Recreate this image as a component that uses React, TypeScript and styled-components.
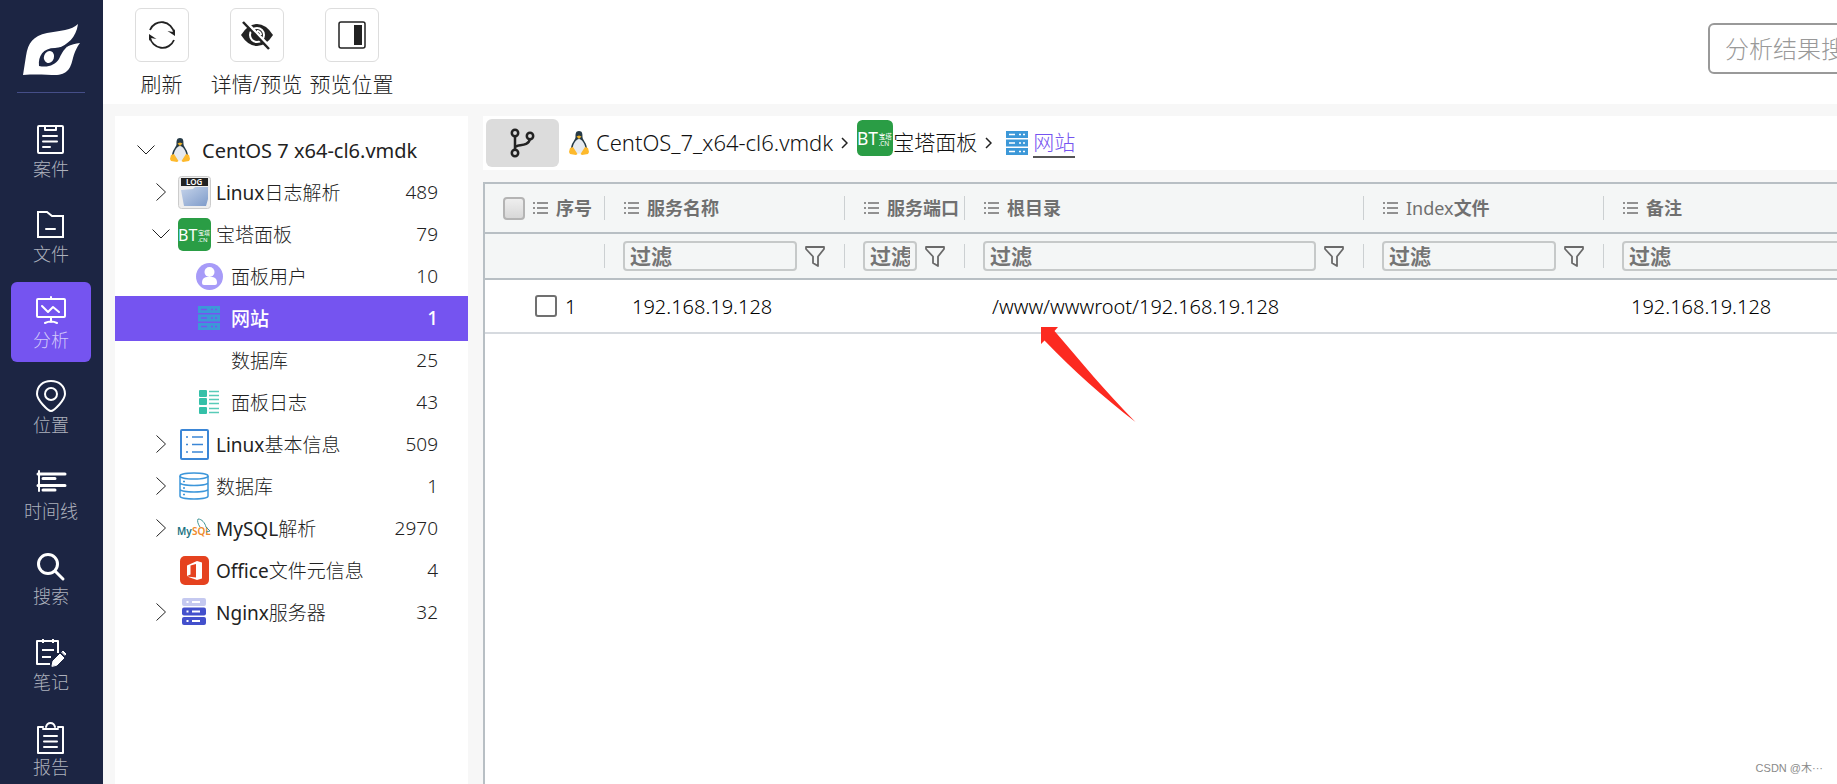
import React from "react";
import styled, { createGlobalStyle, css } from "styled-components";

const latin = `"Noto Sans", "Noto Sans CJK SC", sans-serif`;

const GlobalStyle = createGlobalStyle`
  * { box-sizing: border-box; }
  body { margin: 0; font-family: ${latin}; color: #222; background: #f7f7f7; }
  button, input { font-family: inherit; }
`;

const Page = styled.div`
  display: flex;
  height: 100vh;
  overflow: hidden;
  position: relative;
`;

const Sidebar = styled.nav`
  flex: 0 0 103px;
  background: #1c2543;
  display: flex;
  flex-direction: column;
  align-items: center;
  padding: 22px 1px 0 0;
  > * { flex-shrink: 0; }
`;

const SidebarRule = styled.hr`
  width: 68px;
  height: 1px;
  margin: 15px 0 18px;
  border: 0;
  background: #454e88;
`;

const SideList = styled.ul`
  list-style: none;
  margin: 0;
  padding: 0;
  display: flex;
  flex-direction: column;
  justify-content: space-between;
  height: 678px;
`;

const SideButton = styled.button<{ $active?: boolean }>`
  width: 80px;
  height: 80px;
  border: 0;
  border-radius: 6px;
  padding: 12px 0 0;
  display: flex;
  flex-direction: column;
  align-items: center;
  background: ${(p) => (p.$active ? "#7554f0" : "transparent")};
  color: ${(p) => (p.$active ? "#d2c8fa" : "#adb1bd")};
  font-size: 18px;
  font-weight: 300;
  line-height: 26px;
  svg { color: #fff; }
`;

const Workspace = styled.div`
  flex: 1;
  min-width: 0;
  display: flex;
  flex-direction: column;
`;

const Toolbar = styled.header`
  flex: 0 0 104px;
  background: #fff;
  display: flex;
  align-items: flex-start;
  padding: 8px 0 0 11px;
  overflow: hidden;
`;

const ToolButton = styled.button`
  width: 95px;
  padding: 0;
  border: 0;
  background: none;
  display: flex;
  flex-direction: column;
  align-items: center;
  font-size: 21px;
  font-weight: 300;
  line-height: 30px;
  white-space: nowrap;
  color: #222;
`;

const ToolIcon = styled.span`
  width: 54px;
  height: 54px;
  margin-bottom: 7px;
  border: 1px solid #ddd;
  border-radius: 6px;
  display: flex;
  align-items: center;
  justify-content: center;
`;

const SearchBox = styled.input`
  flex: none;
  width: 260px;
  height: 51px;
  margin: 15px -131px 0 auto;
  padding: 0 15px;
  border: 2px solid #999;
  border-radius: 6px;
  font-size: 24px;
  font-weight: 300;
  outline: 0;
  &::placeholder { color: #999; opacity: 1; }
`;

const Body = styled.div`
  flex: 1;
  min-height: 0;
  display: flex;
  gap: 15px;
  padding: 12px 0 0 12px;
`;

const TreePanel = styled.aside`
  flex: 0 0 353px;
  background: #fff;
`;

const Tree = styled.ul`
  list-style: none;
  margin: 0;
  padding: 13px 0 0;
`;

const indent = [20, 35, 35];

const TreeRow = styled.li<{ $level: number; $selected?: boolean }>`
  height: 42px;
  padding: 0 30px 0 ${(p) => indent[p.$level]}px;
  display: flex;
  align-items: center;
  font-size: ${(p) => (p.$level === 0 ? 20 : 19)}px;
  font-weight: ${(p) => (p.$level === 0 ? 400 : 300)};
  white-space: nowrap;
  ${(p) =>
    p.$selected &&
    css`
      background: #7554f0;
      box-shadow: 0 -1px 0 #7554f0, 0 2px 0 #7554f0;
      color: #fff;
      font-weight: 500;
    `}
`;

const Chevron = styled.span`
  flex: 0 0 22px;
  display: flex;
  justify-content: center;
`;

const TreeIcon = styled.span<{ $level: number }>`
  flex: 0 0 ${(p) => [45, 44, 59][p.$level]}px;
  padding: 0 ${(p) => [5, 0, 0][p.$level]}px 0 ${(p) => [5, 0, 15][p.$level]}px;
  display: flex;
  justify-content: center;
`;

const TreeLabel = styled.span`
  flex: 1;
`;

const Main = styled.main`
  flex: 1;
  min-width: 0;
  display: flex;
  flex-direction: column;
  gap: 12px;
`;

const Crumbs = styled.div`
  flex: 0 0 54px;
  background: #fff;
  display: flex;
  align-items: center;
  padding-left: 3px;
  font-size: 21px;
  font-weight: 300;
  white-space: nowrap;
`;

const BranchButton = styled.button`
  width: 73px;
  height: 48px;
  margin-right: 10px;
  padding: 0;
  border: 0;
  border-radius: 6px;
  background: #dcdcdc;
  display: flex;
  align-items: center;
  justify-content: center;
`;

const Crumb = styled.a<{ $gap?: number; $current?: boolean; $raised?: boolean }>`
  display: flex;
  align-items: center;
  gap: ${(p) => p.$gap ?? 0}px;
  padding-left: ${(p) => (p.$current ? 5 : 0)}px;
  color: ${(p) => (p.$current ? "#7554f0" : "#111")};
  text-decoration: none;
  svg { margin-bottom: ${(p) => (p.$raised ? 10 : 0)}px; }
  > span {
    line-height: 28px;
    border-bottom: 2px solid ${(p) => (p.$current ? "#555" : "transparent")};
  }
`;

const DiskName = styled.span`
  font-size: 22px;
`;

const CrumbArrow = styled.svg`
  margin: 0 9px 0 8px;
`;

const TableFrame = styled.section`
  flex: 1;
  min-height: 0;
  overflow: hidden;
  background: #fff;
  border: solid #b8bfc4;
  border-width: 2px 0 0 2px;
`;

const Table = styled.table`
  table-layout: fixed;
  width: 1518px;
  border-collapse: collapse;
  th, td { padding: 0; text-align: left; }
  thead tr { background: #f4f6f6; border-bottom: 2px solid #b8bfc4; }
  tbody tr { border-bottom: 2px solid #d6dadf; }
`;

const HeadCell = styled.div<{ $first?: boolean; $tall?: boolean }>`
  height: 24px;
  margin: ${(p) => (p.$tall ? "12px 0 12px" : "10px 0 10px")};
  padding-left: ${(p) => (p.$first ? 18 : 19)}px;
  border-right: 1px solid #ccd0d2;
  display: flex;
  align-items: center;
  gap: 8px;
  font-size: 18px;
  line-height: 24px;
  font-weight: 700;
  color: #707070;
  white-space: nowrap;
`;

const Regular = styled.span`
  font-weight: 400;
`;

const FilterInput = styled.input`
  flex: 1;
  min-width: 0;
  height: 30px;
  padding: 0 5px;
  border: 2px solid #c6c9c9;
  border-radius: 4px;
  background: transparent;
  font-size: 21px;
  font-weight: 700;
  outline: 0;
  &::placeholder { color: #747474; opacity: 1; }
`;

const FilterButton = styled.button`
  width: 20px;
  margin-right: 19px;
  padding: 0;
  border: 0;
  background: none;
  display: flex;
`;

const CheckAll = styled.input`
  appearance: none;
  width: 22px;
  height: 23px;
  margin: 0;
  border: 2px solid #b4b4b4;
  border-radius: 4px;
  background: linear-gradient(#eee, #d8d8d8);
`;

const CheckRow = styled.input`
  appearance: none;
  width: 22px;
  height: 22px;
  margin: 0;
  border: 2px solid #707070;
  border-radius: 3px;
  background: #fff;
`;

const DataCell = styled.div<{ $first?: boolean }>`
  height: 52px;
  padding-left: ${(p) => (p.$first ? 50 : 27)}px;
  display: flex;
  align-items: center;
  gap: 8px;
  font-size: 20px;
  font-weight: 300;
  color: #000;
  white-space: nowrap;
`;

const PointerArrow = styled.svg`
  position: absolute;
  left: 1041px;
  top: 327px;
`;

const Watermark = styled.small`
  position: absolute;
  right: 14px;
  bottom: 7px;
  font-size: 11px;
  line-height: 18px;
  color: #8a8a8a;
  font-family: "Liberation Sans", "Noto Sans CJK SC", sans-serif;
`;

/* ---------- icons ---------- */

const Logo = () => (
  <svg width="60" height="55" viewBox="-1 0 60 55">
    <path d="M56 2C50 8 38 9 25 11C11 14 6 21 4 34L1 53C16 52 24 53 35 53C47 52 49 44 51 36C53 29 55 25 58 21C49 22 41 27 35 27C46 22 54 16 56 2Z" fill="#fff" />
    <path d="M17 44C16 34 21 26 33 26L46 24C41 28 39 33 37 37C33 43 26 46 17 44Z" fill="#1c2543" />
    <ellipse cx="27" cy="35" rx="5" ry="6" fill="#fff" transform="rotate(20 27 35)" />
  </svg>
);

const line = { fill: "none", stroke: "currentColor", strokeWidth: 2 } as const;
const SideSvg = ({ children }: { children: React.ReactNode }) => (
  <svg width="32" height="33" viewBox="0 0 32 33" {...line} strokeLinecap="round" strokeLinejoin="round">
    {children}
  </svg>
);

const sideIcons = {
  case: (
    <SideSvg>
      <rect x="3" y="3" width="25" height="27" rx="1" />
      <path d="M10 3v4h11V3M8 13h14M8 18.500h14M8 24h7" />
    </SideSvg>
  ),
  file: (
    <SideSvg>
      <path d="M3 4h9l5 4h11v21H3zM11 21h9" strokeLinejoin="miter" />
    </SideSvg>
  ),
  analysis: (
    <SideSvg>
      <rect x="2" y="5" width="28" height="18" rx="1" />
      <path d="M16 3v2M7 12l6 6 5-5 6 5M16 23v5M10 29q6-3 12 0" />
    </SideSvg>
  ),
  place: (
    <SideSvg>
      <path d="M16 32C13 32 2 21 2 15C2 7 8 2 16 2s14 5 14 13c0 6-11 17-14 17z" />
      <circle cx="16" cy="15" r="6" />
    </SideSvg>
  ),
  timeline: (
    <SideSvg>
      <path d="M4 6v20" />
      <path d="M3 9h27M8 13.500h12M3 20.500h27M8 25h12" strokeWidth="3" />
    </SideSvg>
  ),
  search: (
    <SideSvg>
      <circle cx="13" cy="14" r="9.500" strokeWidth="3" />
      <path d="M20 21l8 8" strokeWidth="3" />
    </SideSvg>
  ),
  note: (
    <SideSvg>
      <path d="M23 17V5H2v23h13M8 3v4M18 3v4M7 14h12M7 21h9" strokeLinecap="butt" />
      <path d="M17 30l1-5 7-7 4 4-7 7zM27 16l1-1 3 3-1 1z" fill="currentColor" strokeWidth="1" />
    </SideSvg>
  ),
  report: (
    <SideSvg>
      <path d="M8 6H3v26h25V6h-5M8 8h15M11 6q1-4 4.500-4T20 6M9 15h13M9 20.500h13M9 26h13" />
    </SideSvg>
  ),
};

const Refresh = () => (
  <svg width="30" height="30" viewBox="0 0 30 30" {...line} strokeWidth={1.8}>
    <path d="M3 10A12.500 12.500 0 0 1 27 13M27 20A12.500 12.500 0 0 1 3 17" />
    <path d="M20.500 11l7.500 5V9l-2 3zM9.500 19L2 14v7l2-3z" fill="currentColor" stroke="none" />
  </svg>
);

const EyeOff = () => (
  <svg width="34" height="30" viewBox="0 0 34 30">
    <path d="M1 15Q8 4 17 4t16 11Q26 26 17 26T1 15z" fill="#222" />
    <circle cx="17" cy="15" r="7" fill="none" stroke="#fff" strokeWidth="2" />
    <path d="M17 11a4 4 0 0 1 4 4" fill="none" stroke="#fff" strokeWidth="2" />
    <path d="M5 1l26 27" stroke="#fff" strokeWidth="3" />
    <path d="M3 2l26 27" stroke="#222" strokeWidth="2.500" />
  </svg>
);

const PanelSide = () => (
  <svg width="28" height="28" viewBox="0 0 28 28">
    <rect x="1" y="1" width="26" height="26" rx="2" {...line} strokeWidth={1.5} />
    <rect x="16" y="4" width="8" height="20" fill="#222" />
  </svg>
);

const Tux = () => (
  <svg width="20" height="24" viewBox="0 0 20 24">
    <path d="M10 0C6.500 0 6.500 3 6.500 6C6.500 9 2 12 2 18L5 22h10l3-4C18 12 13.500 9 13.500 6C13.500 3 13.500 0 10 0z" fill="#263a46" />
    <path d="M10 8C7 8 3.500 14 3.500 18C3.500 21 7 22.500 10 22.500s6.500-1.500 6.500-4.500C16.500 14 13 8 10 8z" fill="#e6eaf0" />
    <path d="M7.500 5.500L10 4.500l2.500 1L10 8z" fill="#f0b429" />
    <path d="M0 21l1-4 3-1 4.500 7-1.500 1-6-1zM20 21l-1-4-3-1-4.500 7 1.500 1 6-1z" fill="#fdb92c" />
  </svg>
);

const BT = ({ size }: { size: number }) => (
  <svg width={size} height={size} viewBox="0 0 33 33">
    <rect width="33" height="33" rx="5" fill="#2a9d45" />
    <g fill="#fff" fontWeight="400">
      <text x="0" y="23" fontSize="16">BT</text>
      <text x="20" y="17" fontSize="6">宝塔</text>
      <text x="20" y="24" fontSize="6">.CN</text>
    </g>
  </svg>
);

const LogIcon = () => (
  <svg width="33" height="33" viewBox="0 0 33 33">
    <defs>
      <linearGradient id="paper" x1="0" y1="0" x2="1" y2="1">
        <stop offset="0" stopColor="#c5d3ea" />
        <stop offset="1" stopColor="#7f9cca" />
      </linearGradient>
    </defs>
    <rect x=".5" y=".5" width="32" height="32" rx="3" fill="#eee" stroke="#ccc" />
    <rect x="3" y="2" width="27" height="8" fill="#222" />
    <text x="8" y="9" fontSize="8" fontWeight="600" fill="#fff">LOG</text>
    <path d="M3 14l12-1 2-2h13v12l-2 7H6z" fill="url(#paper)" />
  </svg>
);

const UserIcon = () => (
  <svg width="27" height="27" viewBox="0 0 27 27">
    <circle cx="13.500" cy="13.500" r="13.500" fill="#a79bf8" />
    <circle cx="13.500" cy="9" r="5" fill="#fff" />
    <path d="M6 20c0-6 4-6 7.500-6s7.500 0 7.500 6q0 2-2 2H8q-2 0-2-2z" fill="#fff" />
  </svg>
);

const Servers = ({ hole }: { hole: string }) => (
  <svg width="22" height="24" viewBox="0 0 22 24">
    {[0, 8.5, 17].map((y) => (
      <g key={y}>
        <rect y={y} width="22" height="7" fill="#3c98d8" />
        <path d={`M3 ${y + 3.5}h6M13 ${y + 3.5}h2M17 ${y + 3.5}h2`} stroke={hole} strokeWidth="1.500" />
      </g>
    ))}
  </svg>
);

const PanelLog = () => (
  <svg width="20" height="24" viewBox="0 0 20 24">
    {[0, 8, 17].map((y) => (
      <g key={y}>
        <rect y={y} width="8" height="7" rx="1" fill="#34c0a8" />
        <path d={`M10 ${y + 1.5}h10M10 ${y + 5.5}h10`} stroke="#58cbb8" strokeWidth="1.500" />
      </g>
    ))}
  </svg>
);

const InfoList = () => (
  <svg width="29" height="31" viewBox="0 0 29 31" fill="none" stroke="#3b86d6" strokeWidth="2">
    <rect x="1" y="1" width="27" height="29" rx="1" />
    <path d="M6 8h2M12 8h11M6 15.500h2M12 15.500h11M6 23h2M12 23h11" strokeWidth="1.500" />
  </svg>
);

const Database = () => (
  <svg width="30" height="28" viewBox="0 0 30 28" fill="none" stroke="#3c96da" strokeWidth="1.500">
    <ellipse cx="15" cy="4" rx="14" ry="3" />
    <path d="M1 4v20c0 4 28 4 28 0V4M1 10.500c0 4 28 4 28 0M1 17c0 4 28 4 28 0" />
    <path d="M4 9.500h2M4 16h2M4 22.500h2" />
  </svg>
);

const MySQL = () => (
  <svg width="34" height="20" viewBox="0 0 34 20">
    <g fontSize="10" fontWeight="600">
      <text x="0" y="17" fill="#1c7282">My</text>
      <text x="15" y="17" fill="#ef8a2c">SQL</text>
    </g>
    <path d="M23 9C21 6 20 3 21 1C25 1 28 5 29 9l4 4-4 1" fill="none" stroke="#3f9596" />
  </svg>
);

const Office = () => (
  <svg width="29" height="29" viewBox="0 0 29 29">
    <rect width="29" height="29" rx="5" fill="#e5421f" />
    <path d="M7 9.500L17 5l5 1.500v16L17 24 7 20.500l9 1V8l-5.500 1.500v9L7 20z" fill="#fff" />
  </svg>
);

const Nginx = () => (
  <svg width="24" height="28" viewBox="0 0 24 28">
    {["#c5c9f0", "#4350cc", "#4350cc"].map((c, i) => (
      <g key={i}>
        <rect y={i * 9.5} width="24" height="8" rx="2" fill={c} />
        <path d={`M4.500 ${i * 9.5 + 4}h2M10 ${i * 9.5 + 4}h8`} stroke="#fff" strokeWidth="2" />
      </g>
    ))}
  </svg>
);

const ListIcon = () => (
  <svg width="15" height="12" viewBox="0 0 15 12" stroke="#707070" strokeWidth="1.500">
    <path d="M0 1h2M4 1h11M0 6h2M4 6h11M0 11h2M4 11h11" />
  </svg>
);

const Funnel = () => (
  <svg width="20" height="21" viewBox="0 0 20 21" fill="none" stroke="#6a6a6a" strokeWidth="1.800" strokeLinejoin="round">
    <path d="M1 1h18v2l-6 7.500V20l-5-3v-6.500L1 3z" />
  </svg>
);

const Branch = () => (
  <svg width="25" height="30" viewBox="0 0 25 30" fill="none" stroke="#222" strokeWidth="2.500">
    <circle cx="5" cy="5" r="3.200" />
    <circle cx="20" cy="8" r="3.200" />
    <circle cx="5" cy="25" r="3.200" />
    <path d="M5 8v14M5 20c0-5 13 0 15-9" />
  </svg>
);

const ChevronDown = () => (
  <svg width="18" height="10" viewBox="0 0 18 10" {...line} strokeWidth={1}>
    <path d="M.5.5L9 9 17.500.5" />
  </svg>
);
const ChevronRight = () => (
  <svg width="10" height="18" viewBox="0 0 10 18" {...line} strokeWidth={1}>
    <path d="M.5.500L9.500 9 .5 17.500" />
  </svg>
);
const Arrow = () => (
  <CrumbArrow width="7" height="12" viewBox="0 0 7 12" {...line} strokeWidth={1.5}>
    <path d="M1 1l5 5-5 5" />
  </CrumbArrow>
);

/* ---------- data ---------- */

const sideItems: { label: string; icon: keyof typeof sideIcons; active?: boolean }[] = [
  { label: "案件", icon: "case" },
  { label: "文件", icon: "file" },
  { label: "分析", icon: "analysis", active: true },
  { label: "位置", icon: "place" },
  { label: "时间线", icon: "timeline" },
  { label: "搜索", icon: "search" },
  { label: "笔记", icon: "note" },
  { label: "报告", icon: "report" },
];

const tools = [
  { label: "刷新", icon: <Refresh /> },
  { label: "详情/预览", icon: <EyeOff /> },
  { label: "预览位置", icon: <PanelSide /> },
];

type Node = { level: number; prefix?: string; label: string; count?: number; icon?: React.ReactNode; open?: boolean; selected?: boolean };
const nodes: Node[] = [
  { level: 0, label: "CentOS 7 x64-cl6.vmdk", icon: <Tux />, open: true },
  { level: 1, prefix: "Linux", label: "日志解析", count: 489, icon: <LogIcon />, open: false },
  { level: 1, label: "宝塔面板", count: 79, icon: <BT size={33} />, open: true },
  { level: 2, label: "面板用户", count: 10, icon: <UserIcon /> },
  { level: 2, label: "网站", count: 1, icon: <Servers hole="#7554f0" />, selected: true },
  { level: 2, label: "数据库", count: 25 },
  { level: 2, label: "面板日志", count: 43, icon: <PanelLog /> },
  { level: 1, prefix: "Linux", label: "基本信息", count: 509, icon: <InfoList />, open: false },
  { level: 1, label: "数据库", count: 1, icon: <Database />, open: false },
  { level: 1, prefix: "MySQL", label: "解析", count: 2970, icon: <MySQL />, open: false },
  { level: 1, prefix: "Office", label: "文件元信息", count: 4, icon: <Office /> },
  { level: 1, prefix: "Nginx", label: "服务器", count: 32, icon: <Nginx />, open: false },
];

const columns = [
  { key: "name", width: 240, title: "服务名称", value: "192.168.19.128" },
  { key: "port", width: 120, title: "服务端口", value: "" },
  { key: "root", width: 399, title: "根目录", value: "/www/wwwroot/192.168.19.128" },
  { key: "index", width: 240, title: <span><Regular>Index</Regular>文件</span>, value: "" },
  { key: "note", width: 399, title: "备注", value: "192.168.19.128" },
];

export default function App() {
  return (
    <Page>
      <GlobalStyle />
      <Sidebar>
        <Logo />
        <SidebarRule />
        <SideList>
          {sideItems.map((s) => (
            <li key={s.icon}>
              <SideButton $active={s.active}>
                {sideIcons[s.icon]}
                {s.label}
              </SideButton>
            </li>
          ))}
        </SideList>
      </Sidebar>
      <Workspace>
        <Toolbar>
          {tools.map((t) => (
            <ToolButton key={t.label}>
              <ToolIcon>{t.icon}</ToolIcon>
              {t.label}
            </ToolButton>
          ))}
          <SearchBox type="text" placeholder="分析结果搜" />
        </Toolbar>
        <Body>
          <TreePanel>
            <Tree>
              {nodes.map((n, i) => (
                <TreeRow key={i} $level={n.level} $selected={n.selected}>
                  <Chevron>{n.open === undefined ? null : n.open ? <ChevronDown /> : <ChevronRight />}</Chevron>
                  <TreeIcon $level={n.level}>{n.icon}</TreeIcon>
                  <TreeLabel>
                    {n.prefix && <Regular>{n.prefix}</Regular>}
                    {n.label}
                  </TreeLabel>
                  {n.count !== undefined && <span>{n.count}</span>}
                </TreeRow>
              ))}
            </Tree>
          </TreePanel>
          <Main>
            <Crumbs>
              <BranchButton aria-label="路径">
                <Branch />
              </BranchButton>
              <Crumb href="#disk" $gap={7}>
                <Tux />
                <DiskName>CentOS_7_x64-cl6.vmdk</DiskName>
              </Crumb>
              <Arrow />
              <Crumb href="#panel" $raised>
                <BT size={36} />
                <span>宝塔面板</span>
              </Crumb>
              <Arrow />
              <Crumb href="#site" $gap={5} $current>
                <Servers hole="#fff" />
                <span>网站</span>
              </Crumb>
            </Crumbs>
            <TableFrame>
              <Table>
                <colgroup>
                  <col width={120} />
                  {columns.map((c) => (
                    <col key={c.key} width={c.width} />
                  ))}
                </colgroup>
                <thead>
                  <tr>
                    <th>
                      <HeadCell $first $tall>
                        <CheckAll type="checkbox" aria-label="全选" />
                        <ListIcon />
                        序号
                      </HeadCell>
                    </th>
                    {columns.map((c) => (
                      <th key={c.key}>
                        <HeadCell $tall>
                          <ListIcon />
                          {c.title}
                        </HeadCell>
                      </th>
                    ))}
                  </tr>
                  <tr>
                    <td>
                      <HeadCell $first />
                    </td>
                    {columns.map((c) => (
                      <td key={c.key}>
                        <HeadCell $first>
                          <FilterInput type="text" placeholder="过滤" />
                          <FilterButton aria-label="过滤">
                            <Funnel />
                          </FilterButton>
                        </HeadCell>
                      </td>
                    ))}
                  </tr>
                </thead>
                <tbody>
                  <tr>
                    <td>
                      <DataCell as="label" $first>
                        <CheckRow type="checkbox" />1
                      </DataCell>
                    </td>
                    {columns.map((c) => (
                      <td key={c.key}>
                        <DataCell>{c.value}</DataCell>
                      </td>
                    ))}
                  </tr>
                </tbody>
              </Table>
            </TableFrame>
          </Main>
        </Body>
      </Workspace>
      <PointerArrow width="95" height="96" viewBox="0 0 95 96">
        <path d="M0 0H17L13.500 4C40 35 65 65 94.500 95C62 70 32 43 3.500 13.500L0 17Z" fill="#fc2a20" />
      </PointerArrow>
      <Watermark>CSDN @木···</Watermark>
    </Page>
  );
}
